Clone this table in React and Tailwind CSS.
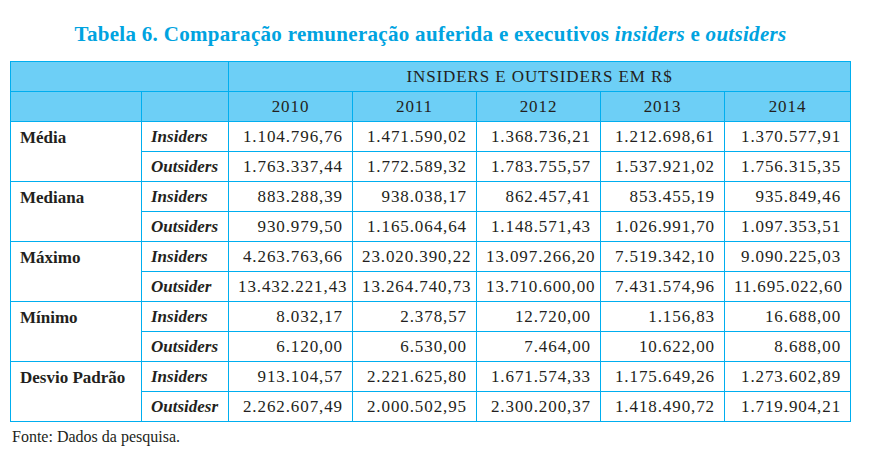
import React from "react";

const years = ["2010", "2011", "2012", "2013", "2014"];

const groups = [
  {
    label: "Média",
    rows: [
      ["Insiders", ["1.104.796,76", "1.471.590,02", "1.368.736,21", "1.212.698,61", "1.370.577,91"]],
      ["Outsiders", ["1.763.337,44", "1.772.589,32", "1.783.755,57", "1.537.921,02", "1.756.315,35"]],
    ],
  },
  {
    label: "Mediana",
    rows: [
      ["Insiders", ["883.288,39", "938.038,17", "862.457,41", "853.455,19", "935.849,46"]],
      ["Outsiders", ["930.979,50", "1.165.064,64", "1.148.571,43", "1.026.991,70", "1.097.353,51"]],
    ],
  },
  {
    label: "Máximo",
    rows: [
      ["Insiders", ["4.263.763,66", "23.020.390,22", "13.097.266,20", "7.519.342,10", "9.090.225,03"]],
      ["Outsider", ["13.432.221,43", "13.264.740,73", "13.710.600,00", "7.431.574,96", "11.695.022,60"]],
    ],
  },
  {
    label: "Mínimo",
    rows: [
      ["Insiders", ["8.032,17", "2.378,57", "12.720,00", "1.156,83", "16.688,00"]],
      ["Outsiders", ["6.120,00", "6.530,00", "7.464,00", "10.622,00", "8.688,00"]],
    ],
  },
  {
    label: "Desvio Padrão",
    rows: [
      ["Insiders", ["913.104,57", "2.221.625,80", "1.671.574,33", "1.175.649,26", "1.273.602,89"]],
      ["Outsidesr", ["2.262.607,49", "2.000.502,95", "2.300.200,37", "1.418.490,72", "1.719.904,21"]],
    ],
  },
];

const cell = "border border-[#00aeef] h-[30px] px-[9px] pt-[1px] pb-0";

export default function App() {
  return (
    <div className="w-[876px] h-[463px] bg-white text-[#231f20] font-['Liberation_Serif']">
      <div className="w-[861px] pt-[21px]">
        <h1 className="text-center text-[21px] leading-[27px] font-bold tracking-[0.3px] text-[#00a3e0]">
          Tabela 6. Comparação remuneração auferida e executivos <i>insiders</i> e <i>outsiders</i>
        </h1>
      </div>
      <table className="ml-[10px] mt-[13px] border-collapse table-fixed w-[840px] text-[17px] leading-[20px]">
        <colgroup>
          <col className="w-[131px]" />
          <col className="w-[87px]" />
          <col className="w-[124px]" />
          <col className="w-[124px]" />
          <col className="w-[124px]" />
          <col className="w-[124px]" />
          <col className="w-[126px]" />
        </colgroup>
        <thead>
          <tr className="bg-[#6dcff6]">
            <th colSpan={2} className={cell}></th>
            <th colSpan={5} className={`${cell} font-normal text-center tracking-[0.9px]`}>
              INSIDERS E OUTSIDERS EM R$
            </th>
          </tr>
          <tr className="bg-[#6dcff6]">
            <th className={cell}></th>
            <th className={cell}></th>
            {years.map((y) => (
              <th key={y} className={`${cell} font-normal text-center tracking-[0.9px]`}>
                {y}
              </th>
            ))}
          </tr>
        </thead>
        <tbody>
          {groups.map((g) =>
            g.rows.map(([kind, vals], i) => (
              <tr key={g.label + kind}>
                {i === 0 && (
                  <td rowSpan={2} className={`${cell} align-top !pt-[6px] font-semibold`}>
                    {g.label}
                  </td>
                )}
                <td className={`${cell} italic font-semibold`}>{kind}</td>
                {vals.map((v, j) => (
                  <td key={j} className={`${cell} text-right tracking-[0.9px]`}>
                    {v}
                  </td>
                ))}
              </tr>
            ))
          )}
        </tbody>
      </table>
      <p className="ml-[12px] mt-[5px] text-[16px] leading-[20px]">Fonte: Dados da pesquisa.</p>
    </div>
  );
}
